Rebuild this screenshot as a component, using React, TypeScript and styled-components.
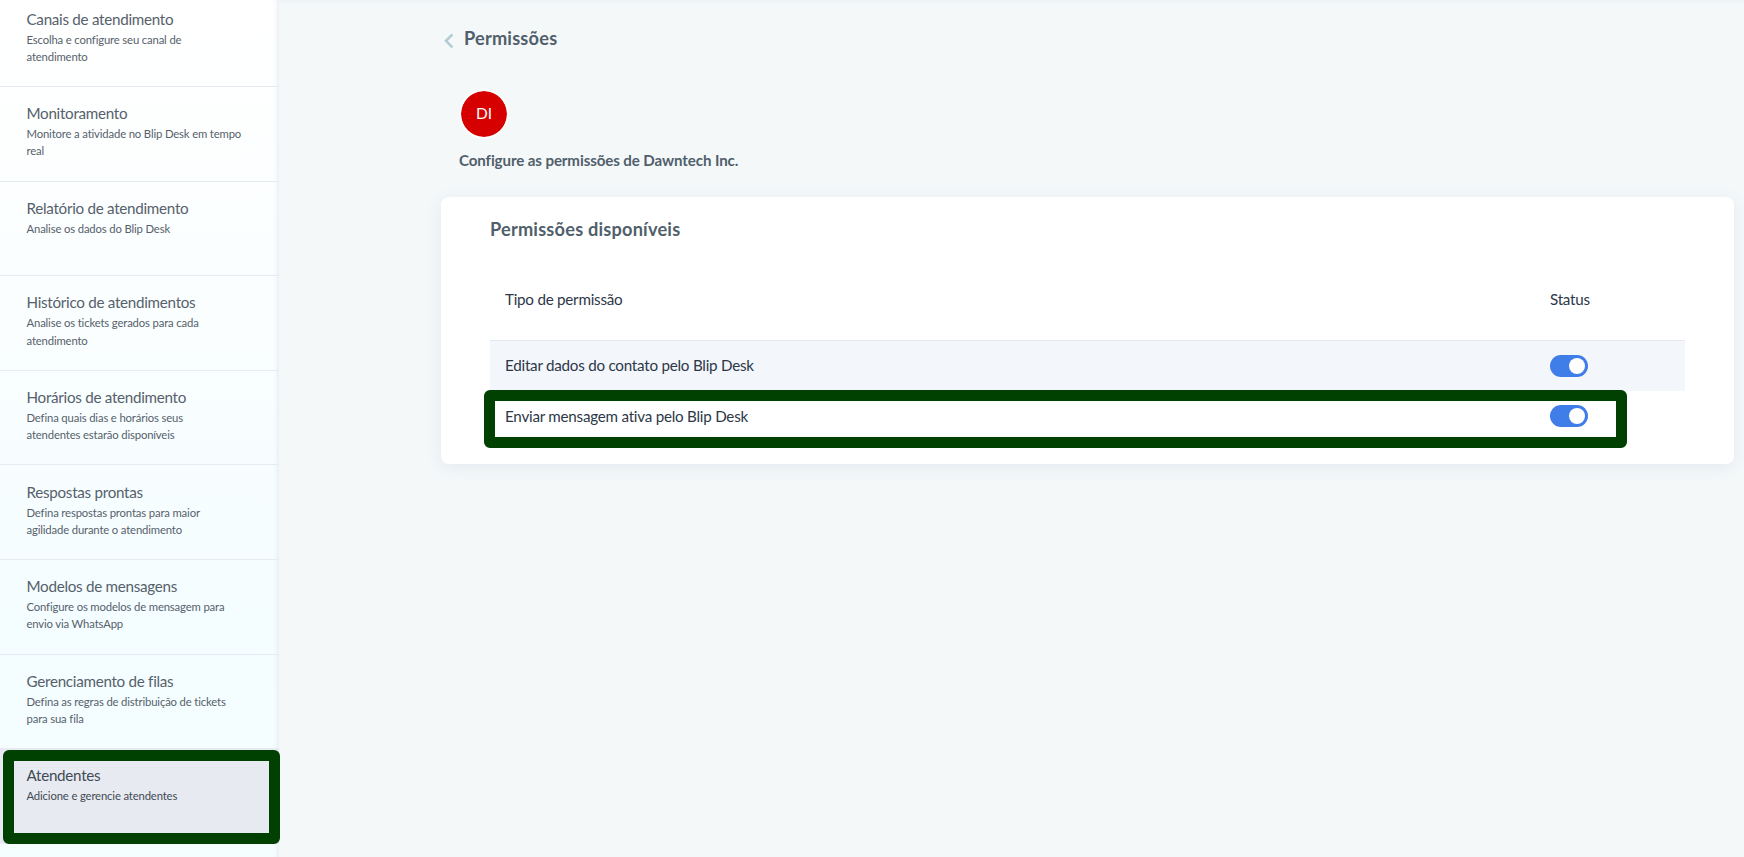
import React from 'react';
import styled, { createGlobalStyle } from 'styled-components';

const GlobalStyle = createGlobalStyle`
  *, *::before, *::after { box-sizing: border-box; }
  body {
    margin: 0;
    overflow: hidden;
    background: #f4f8f9;
    color: #505f6b;
    font-family: Lato, 'Liberation Sans', sans-serif;
  }
`;

const Page = styled.div`
  display: flex;
  height: 857px;
  overflow: hidden;
`;

const Sidebar = styled.nav`
  position: relative;
  flex: none;
  width: 279px;
  height: 857px;
  background: linear-gradient(180deg, #ffffff 0%, #fafeff 40%, #f4fdff 72%, #f5feff 100%);
  box-shadow: inset -5px 0 4px -3px #e9edf5;
`;

const MenuList = styled.ul`
  margin: -7.6px 0 0;
  padding: 0;
  list-style: none;
`;

const MenuItem = styled.li<{ $active?: boolean }>`
  height: ${p => (p.$active ? 95.6 : 94.6)}px;
  margin-top: ${p => (p.$active ? -1 : 0)}px;
  padding: ${p => (p.$active ? 16.3 : 15.3)}px 32px 0 26.5px;
  border-bottom: 1px solid ${p => (p.$active ? 'transparent' : '#e6eaf1')};
  background: ${p => (p.$active ? '#e8eaf2' : 'transparent')};
  color: ${p => (p.$active ? '#3f4a54' : '#56616b')};
`;

const MenuTitle = styled.div`
  font-size: 15.2px;
  line-height: 22px;
  letter-spacing: -0.28px;
`;

const MenuText = styled.div`
  margin-top: 1px;
  font-size: 11.3px;
  line-height: 17.1px;
  letter-spacing: -0.15px;
  white-space: nowrap;
`;

const Highlight = styled.div`
  position: absolute;
  border: 11px solid #004000;
  border-radius: 6px;
  pointer-events: none;
`;

const MenuHighlight = styled(Highlight)`
  top: 750px;
  left: 3px;
  width: 277px;
  height: 94px;
  z-index: 1;
`;

const Main = styled.main`
  flex: 1;
  padding: 26px 10px 0 162px;
  background: #f4f8f9;
  box-shadow: inset 0 5px 5px -4px #e9eef2;
`;

const PageHeader = styled.header`
  display: flex;
  height: 24px;
  padding-left: 3px;
`;

const BackIcon = styled.svg`
  width: 10px;
  height: 15px;
  margin: 7px 10px 0 0;
`;

const Heading = styled.h1`
  margin: 0;
  font-size: 18.2px;
  font-weight: 700;
  line-height: 24px;
  letter-spacing: 0.2px;
`;

const Person = styled.section`
  height: 147px;
  padding: 39px 0 0 18px;
`;

const Avatar = styled.div`
  display: flex;
  align-items: center;
  justify-content: center;
  width: 50px;
  height: 50px;
  padding-bottom: 2px;
  border: 2px solid #fbfdfd;
  border-radius: 50%;
  background: #d60000;
  background-clip: padding-box;
  color: #fff;
  font-size: 15.5px;
`;

const PersonText = styled.p`
  margin: 11px 0 0;
  font-size: 15.1px;
  font-weight: 700;
  line-height: 20px;
  letter-spacing: -0.1px;
`;

const Card = styled.section`
  height: 267px;
  padding: 20px 49px 0;
  border-radius: 8px;
  background: #fff;
  box-shadow: 0 3px 16px #e2e9f0;
`;

const Table = styled.div`
  position: relative;
  margin-top: 35px;
`;

const Row = styled.div<{ $striped?: boolean }>`
  display: grid;
  grid-template-columns: 1045px 1fr;
  align-items: center;
  height: ${p => (p.$striped ? 51 : 50)}px;
  padding-left: 15px;
  border-top: ${p => (p.$striped ? '1px solid #e2e9f3' : 'none')};
  background: ${p => (p.$striped ? '#f3f6fb' : 'transparent')};
  color: #2d3748;
  font-size: 15.2px;
  letter-spacing: -0.24px;
`;

const HeadRow = styled(Row)`
  align-items: start;
  height: 64px;
  padding-top: 14px;
  line-height: 18px;
`;

const Label = styled.span<{ $raised?: boolean }>`
  line-height: 20px;
  padding-bottom: ${p => (p.$raised ? 3 : 1)}px;
`;

const Toggle = styled.button`
  display: flex;
  justify-content: flex-end;
  align-items: center;
  width: 38px;
  height: 22px;
  padding: 0 3px;
  border: 0;
  border-radius: 11px;
  background: #3f7de8;
`;

const Knob = styled.span`
  width: 16px;
  height: 16px;
  border-radius: 50%;
  background: #fff;
`;

const RowHighlight = styled(Highlight)`
  top: 114px;
  left: -6px;
  width: 1143px;
  height: 58px;
`;

const menu = [
  { title: 'Canais de atendimento', lines: ['Escolha e configure seu canal de', 'atendimento'] },
  { title: 'Monitoramento', lines: ['Monitore a atividade no Blip Desk em tempo', 'real'] },
  { title: 'Relatório de atendimento', lines: ['Analise os dados do Blip Desk'] },
  { title: 'Histórico de atendimentos', lines: ['Analise os tickets gerados para cada', 'atendimento'] },
  { title: 'Horários de atendimento', lines: ['Defina quais dias e horários seus', 'atendentes estarão disponíveis'] },
  { title: 'Respostas prontas', lines: ['Defina respostas prontas para maior', 'agilidade durante o atendimento'] },
  { title: 'Modelos de mensagens', lines: ['Configure os modelos de mensagem para', 'envio via WhatsApp'] },
  { title: 'Gerenciamento de filas', lines: ['Defina as regras de distribuição de tickets', 'para sua fila'] },
  { title: 'Atendentes', lines: ['Adicione e gerencie atendentes'], active: true },
];

const Switch = ({ label }: { label: string }) => (
  <Toggle role="switch" aria-checked="true" aria-label={label}>
    <Knob />
  </Toggle>
);

export default function App() {
  return (
    <Page>
      <GlobalStyle />
      <Sidebar>
        <MenuList>
          {menu.map(item => (
            <MenuItem key={item.title} $active={item.active}>
              <MenuTitle>{item.title}</MenuTitle>
              <MenuText>
                {item.lines.map((line, i) => (
                  <React.Fragment key={line}>
                    {i > 0 && <br />}
                    {line}
                  </React.Fragment>
                ))}
              </MenuText>
            </MenuItem>
          ))}
        </MenuList>
        <MenuHighlight />
      </Sidebar>
      <Main>
        <PageHeader>
          <BackIcon viewBox="0 0 10 15" fill="none" stroke="#b5ccd5" strokeWidth="2.6">
            <path d="M8.4 1.3 2 7.8l6.4 6.5" />
          </BackIcon>
          <Heading>Permissões</Heading>
        </PageHeader>
        <Person>
          <Avatar>DI</Avatar>
          <PersonText>Configure as permissões de Dawntech Inc.</PersonText>
        </Person>
        <Card>
          <Heading as="h2">Permissões disponíveis</Heading>
          <Table>
            <HeadRow>
              <span>Tipo de permissão</span>
              <span>Status</span>
            </HeadRow>
            <Row $striped>
              <Label $raised>Editar dados do contato pelo Blip Desk</Label>
              <Switch label="Editar dados do contato" />
            </Row>
            <Row>
              <Label>Enviar mensagem ativa pelo Blip Desk</Label>
              <Switch label="Enviar mensagem ativa" />
            </Row>
            <RowHighlight />
          </Table>
        </Card>
      </Main>
    </Page>
  );
}
